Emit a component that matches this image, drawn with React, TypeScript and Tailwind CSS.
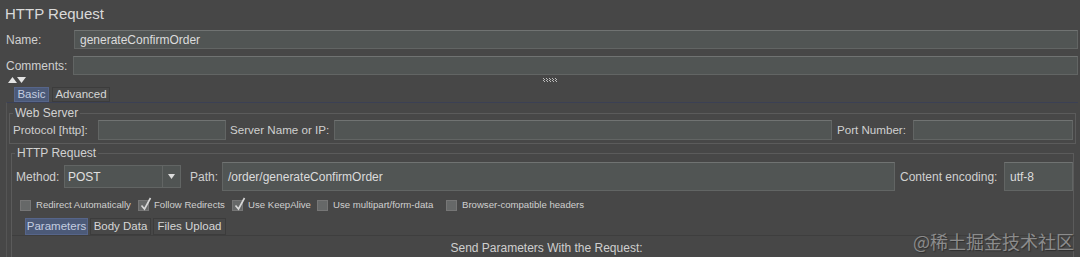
import type { ReactNode } from 'react';

const font = { fontFamily: '"Liberation Sans", Arial, sans-serif' };

function Field({ className, value }: { className: string; value?: string }) {
  return (
    <div
      className={`flex items-center border border-[#626564] border-t-[#707372] bg-[#515554] px-[5px] text-[12px] text-[#dcdcdc] ${className}`}
    >
      {value}
    </div>
  );
}

function Tab({ label, active, className }: { label: string; active?: boolean; className?: string }) {
  return (
    <div
      className={`flex items-center justify-center ${
        active
          ? 'bg-[#4c5a78] text-[#c3cde0] border border-[#56658a]'
          : 'bg-[#484848] text-[#d6d6d6] border border-[#3c3c3c]'
      } ${className ?? ''}`}
    >
      {label}
    </div>
  );
}

function Check({ label, checked, gap }: { label: string; checked?: boolean; gap: string }) {
  return (
    <div className={`flex items-center ${gap}`}>
      <div className="relative h-[11px] w-[11px] shrink-0 border border-[#767676] bg-[#666868]">
        {checked ? (
          <svg className="absolute left-[1px] top-[-4px]" width="12" height="14" viewBox="0 0 12 14">
            <path d="M1.5 8.5 L4.5 12 L10.5 1" fill="none" stroke="#d8d8d8" strokeWidth="1.6" />
          </svg>
        ) : null}
      </div>
      <span className="ml-[5px] text-[9.6px] text-[#cfcfcf]">{label}</span>
    </div>
  );
}

function Group({ title, children, className }: { title: string; children: ReactNode; className: string }) {
  return (
    <fieldset className={`border border-[#5b5b5b] ${className}`}>
      <legend className="ml-[3px] px-[2px] text-[12px] leading-[12px] text-[#d2d2d2]">{title}</legend>
      {children}
    </fieldset>
  );
}

export default function App() {
  return (
    <div className="relative h-[257px] w-[1080px] overflow-hidden bg-[#474747] text-[#d0d0d0]" style={font}>
      {/* header */}
      <div className="flex h-[30px] items-center pl-[5px] pb-[1px] text-[15px] text-[#dadada]">HTTP Request</div>

      <div className="flex h-[19px] items-center">
        <span className="w-[74px] pl-[6px] text-[12px]">Name:</span>
        <Field className="mr-[2px] h-[19px] flex-1" value="generateConfirmOrder" />
      </div>

      <div className="mt-[7px] flex h-[19px] items-center">
        <span className="w-[73px] pl-[6px] text-[12px]">Comments:</span>
        <Field className="mr-[2px] h-[19px] flex-1" />
      </div>

      {/* collapse arrows + drag handle */}
      <div className="relative flex h-[12px] items-start pt-[2px] pl-[8px]">
        <svg width="18" height="6" viewBox="0 0 18 6">
          <path d="M0 6 L4.5 0 L9 6 Z" fill="#e4e4e4" />
          <path d="M9 0 L18 0 L13.5 6 Z" fill="#e4e4e4" />
        </svg>
        <svg className="absolute left-[543px] top-[3px]" width="14" height="4" viewBox="0 0 14 4">
          {[0, 3, 6, 9, 12].map((x) => (
            <g key={x} fill="#bdbdbd">
              <rect x={x} y="0" width="1" height="1" />
              <rect x={x + 1} y="1" width="1" height="1" />
              <rect x={x} y="2" width="1" height="1" />
              <rect x={x + 1} y="3" width="1" height="1" />
            </g>
          ))}
        </svg>
      </div>

      {/* Basic / Advanced tabs */}
      <div className="flex h-[15px] items-end pl-[14px] text-[11.5px]">
        <Tab label="Basic" active className="h-[15px] w-[35px]" />
        <Tab label="Advanced" className="ml-[3px] h-[15px] w-[58px]" />
      </div>

      <div className="ml-[6px] mr-[2px] border-l border-t border-l-[#555555] border-t-[#3b4054] pt-[4px] pl-[1px] pr-[1px]">
        <Group title="Web Server" className="mx-[1px] pb-[3px]">
          <div className="mt-[1px] flex h-[20px] items-center text-[11.6px]">
            <span className="w-[88px] pl-[3px]">Protocol [http]:</span>
            <Field className="h-[20px] w-[128px]" />
            <span className="ml-[4px] w-[104px]">Server Name or IP:</span>
            <Field className="h-[20px] w-[498px]" />
            <span className="ml-[5px] w-[76px]">Port Number:</span>
            <Field className="h-[20px] w-[160px]" />
          </div>
        </Group>

        <Group title="HTTP Request" className="mx-[3px] mt-[3px] h-[120px]">
          <div className="mt-[3px] flex h-[29px] items-center text-[12px]">
            <span className="w-[52px] pl-[4px]">Method:</span>
            <div className="flex h-[23px] w-[117px] items-center border border-[#626564] bg-[#505453] text-[#e0e0e0]">
              <span className="flex-1 pl-[3px]">POST</span>
              <div className="flex h-full w-[18px] items-center justify-center border-l border-[#626564]">
                <svg width="7" height="5" viewBox="0 0 7 5">
                  <path d="M0 0 L7 0 L3.5 5 Z" fill="#dcdcdc" />
                </svg>
              </div>
            </div>
            <span className="ml-[9px] w-[32px]">Path:</span>
            <Field className="h-[29px] w-[673px]" value="/order/generateConfirmOrder" />
            <span className="ml-[5px] w-[104px]">Content encoding:</span>
            <Field className="h-[29px] w-[69px]" value="utf-8" />
          </div>

          <div className="mt-[7px] flex h-[14px] items-center pl-[8px]">
            <Check label="Redirect Automatically" gap="w-[118px]" />
            <Check label="Follow Redirects" checked gap="w-[94px]" />
            <Check label="Use KeepAlive" checked gap="w-[85px]" />
            <Check label="Use multipart/form-data" gap="w-[129px]" />
            <Check label="Browser-compatible headers" gap="w-[160px]" />
          </div>

          <div className="mt-[6px] flex h-[17px] items-end pl-[13px] text-[11.5px]">
            <Tab label="Parameters" active className="h-[17px] w-[63px]" />
            <Tab label="Body Data" className="ml-[2px] h-[17px] w-[61px]" />
            <Tab label="Files Upload" className="ml-[2px] h-[17px] w-[73px]" />
          </div>
          <div className="mr-[2px] border-t border-[#3e3e3e] pt-[3px] text-center text-[12px] text-[#cfcfcf]">
            <span className="pl-[10px]">Send Parameters With the Request:</span>
          </div>
        </Group>
      </div>

      {/* watermark */}
      <div
        className="absolute left-[913px] top-[228px] text-[18px] text-[#8c8c8c] [text-shadow:1px_1px_1px_#2f2f2f]"
        style={{ fontFamily: '"Noto Sans CJK SC", sans-serif' }}
      >
        @稀土掘金技术社区
      </div>
    </div>
  );
}
